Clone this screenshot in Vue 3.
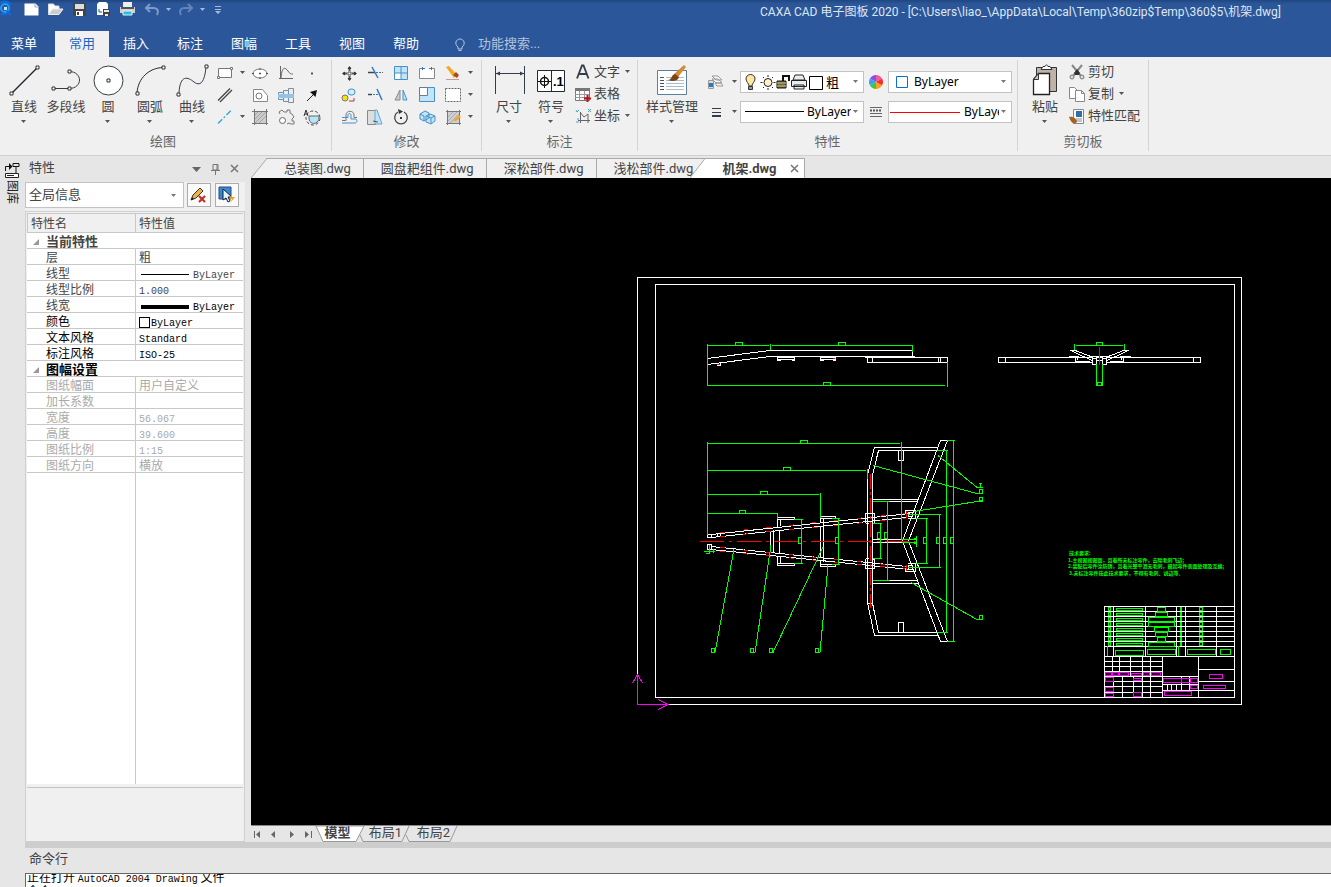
<script setup>
import { ref } from 'vue'

const quick = [
  { name: '新建', art: '<path d="M1.5 3.5h11l3 3v9h-14z" fill="#fff"/><path d="M12 3v4h4" fill="none" stroke="#9aa7bd"/>' },
  { name: '打开', art: '<path d="M1.5 14V4h5l1.500 2H12v3" fill="#fff" stroke="#ddd"/><path d="M1.500 14.500 5.500 9H16l-4 5.500z" fill="#ccc" stroke="#eee"/>' },
  { name: '保存', art: '<path d="M2 3h13v13H3.500L2 14.500z" fill="#444"/><path d="M4 4h9v5H4z" fill="#ddd"/><path d="M5 11h7v5H5z" fill="#fff"/><path d="M6 12h2v3H6z" fill="#444"/>' },
  { name: '另存为', art: '<path d="M4 2h7l2 2v11H2V4z" fill="#fff"/><path d="M4 9v3h3" stroke="#2b579a" fill="none"/><path d="M8 9h7v7H8z" fill="#444"/><path d="M9 10h5v2H9zM10 14h3v2h-3z" fill="#eee"/>' },
  { name: '打印', art: '<path d="M4 2h9v5H4z" fill="#eee"/><path d="M1 7h15v6H1z" fill="#d0d0d0"/><path d="M2 7h13v2H2z" fill="#555"/><path d="M4 11h9v4H4z" fill="#1fc3e8" stroke="#eee"/>' }
]
const menus = ['菜单', '常用', '插入', '标注', '图幅', '工具', '视图', '帮助']
const activeMenu = ref('常用')

const box = (x, y) => `<path d="M${x - 1.5} ${y - 1.5}h3v3h-3z" fill="#fff" stroke="#333"/>`
const draws = [
  { name: '直线', more: true, art: `<path d="M6 31 32 5" stroke="#222a33" stroke-width="1.500"/>${box(5.5, 31.5)}${box(31.5, 5.5)}` },
  { name: '多段线', more: false, art: `<path d="M5 26.500h16c14 0 14-17 0-17" fill="none" stroke="#333c48"/>${box(5.5, 26.5)}${box(21.5, 26.5)}${box(21.5, 9.5)}` },
  { name: '圆', more: true, art: `<circle cx="18.500" cy="18.500" r="14.500" fill="#fff" stroke="#333c48"/>${box(18.500, 18.500)}` },
  { name: '圆弧', more: true, art: `<path d="M5 31C6 16 17 6 31 5.500" fill="none" stroke="#222a33"/>${box(5.5, 31.5)}${box(31.5, 5.5)}` },
  { name: '曲线', more: true, art: `<path d="M5 31C6 12 14 15 20 20c8 6 11-4 12-15" fill="none" stroke="#333c48"/>${box(4.5, 32.5)}${box(32.5, 4.5)}` }
]
const drawTools = [
  { name: '矩形', more: true, art: '<path d="M2.500 4.500h13v9h-13z" fill="#fff" stroke="#777"/><path d="M1.500 12.500h2v2h-2zM14.500 3.500h2v2h-2z" fill="#fff" stroke="#777"/>' },
  { name: '椭圆', art: '<ellipse cx="9" cy="9.500" rx="7" ry="4.500" fill="#fff" stroke="#777"/><path d="M9 8.500v2M8 9.500h2M9 4v2M9 13v2M1 9.500h2M15 9.500h2" stroke="#555"/>' },
  { name: '公式曲线', art: '<path d="M3.500 2v13M2 14.500h14M4 14C5 2 8 3 11 7c2 3 3 3 5 3" fill="none" stroke="#666"/>' },
  { name: '点', art: '<path d="M8 8.500h2v2H8z" fill="#555"/>' },
  { name: '平行线', more: false, art: '<path d="M2 14.500 14 2.500M4 16l12-12" stroke="#444" stroke-width="1.300"/>' },
  { name: '轮廓', art: '<path d="M2.500 3.500h9l5 6v6h-14z" fill="#fff" stroke="#888"/><circle cx="8" cy="10" r="3" fill="#fff" stroke="#777"/>' },
  { name: '轴', art: '<path d="M1.500 6.500h5v7h-5zM6.500 4.500h5v11h-5zM11.500 2.500h5v14h-5z" fill="#eee" stroke="#7a8fa5"/><path d="M1 8h16v4H1z" fill="#8fc5ea"/>' },
  { name: '箭头', art: '<path d="M4 15 10 9" stroke="#222"/><path d="m14 4-1.500 7L7 6z" fill="#111"/>' },
  { name: '中心线', more: true, art: '<path d="M2 15.500 15 2.500" stroke="#27a9e1" stroke-width="1.300" stroke-dasharray="6 2 2 2"/>' },
  { name: '填充', art: '<path d="M3 3h12v12H3z" fill="#ccc"/><path d="m3 8 5-5M3 12l9-9M4 15 15 4M8 15l7-7" stroke="#999" stroke-width=".8"/><path d="M1 3.500h16M1 15.500h16M3.500 1v16M15.500 1v16" stroke="#777"/>' },
  { name: '齿形', art: '<path d="M3 6 2 4l3-2 2 2h3V2h3v3l2 1 2 3-2 2v2h2v3h-3l-2-1-2 1" fill="#eee" stroke="#777"/><circle cx="5.500" cy="12.500" r="3" fill="#fff" stroke="#666"/>' },
  { name: '局部放大', art: '<circle cx="10" cy="10" r="7" fill="none" stroke="#444" stroke-dasharray="3 2"/><path d="M6 8h10c1 9-10 10-10 2z" fill="#b7e4f7" stroke="#666"/><path d="m1 8 2-6 2 6M2 6h3" fill="none" stroke="#333"/>' }
]
const modifyTools = [
  { name: '平移', art: '<path d="M8 8h3v3H8z" fill="#fff" stroke="#555"/><path d="M9.500 3v4M9.500 12v4M3 9.500h4M12 9.500h4" fill="none" stroke="#555" stroke-width="2"/><path d="m9.500 2 2 3h-4zM9.500 17l-2-3h4zM2 9.500l3-2v4zM17 9.500l-3-2v4z" fill="#333"/>' },
  { name: '裁剪', art: '<path d="M2 8.500h7" stroke="#444" stroke-width="1.500"/><path d="M10 8.500h7" stroke="#2f7ac0" stroke-dasharray="2 1"/><path d="m6 3 6 11" stroke="#2f7ac0" stroke-width="1.500"/>' },
  { name: '阵列', art: '<path d="M2.500 2.500h13v13h-13z" fill="#bfe6f8" stroke="#4a8fc5"/><path d="M3 9h6v6H3z" fill="#fff"/><path d="M9 2v13M2 9h13" fill="none" stroke="#4a8fc5"/>' },
  { name: '打断', art: '<path d="M4 4.500H1.500v10h15v-10H14" fill="#fff" stroke="#888"/><path d="M4.500 3v3M13.500 3v3M4 4.500h3M11 4.500h3" stroke="#2f7ac0"/>' },
  { name: '删除', more: true, art: '<path d="m2 3 3-1 8 9-3 3z" fill="#f5a623"/><path d="m9 11 3-3 3 3-2 3z" fill="#a34a28"/><path d="M2 15.500h13" stroke="#c99"/>' },
  { name: '复制', art: '<circle cx="5" cy="12" r="3" fill="#f5e400" stroke="#777"/><rect x="8" y="3" width="7" height="6" rx="3" fill="#cdeffb" stroke="#4a8fc5"/><path d="M9 15h5v-3" fill="none" stroke="#b33"/>' },
  { name: '延伸', art: '<path d="M2 8.500h4" stroke="#444" stroke-width="1.500"/><path d="M7 8.500h5" stroke="#2f7ac0" stroke-dasharray="2 1"/><path d="m11 3 5 11" stroke="#2f7ac0" stroke-width="1.500"/>' },
  { name: '镜像', art: '<path d="M8 4v10H3z" fill="#ccc" stroke="#888"/><path d="M11 4v10h4z" fill="#bfe6f8" stroke="#4a8fc5"/>' },
  { name: '缩放', art: '<path d="M1.500 1.500h15v14h-15z" fill="#bfe6f8" stroke="#4a8fc5"/><path d="M1.500 1.500h8v8h-8z" fill="#fff" stroke="#778"/>' },
  { name: '拉伸', more: true, art: '<path d="M1.500 2.500h15v13h-15z" fill="#fff" stroke="#666" stroke-dasharray="2 1"/>' },
  { name: '等距线', art: '<path d="M2 12.500h4V7c0-5 8-5 8 0v2.500h3" fill="none" stroke="#777"/><path d="M2 9.500h6V7c0-2 3-2 3 0v4h4c3 0 2 4 0 4H2" fill="none" stroke="#4a8fc5"/>' },
  { name: '拔模', art: '<path d="M1.500 2.500H10v14H1.500z" fill="#ddd" stroke="#888"/><path d="m11 2 5 14h-7V2z" fill="#bfe6f8" stroke="#6aa5cc"/><path d="M7 13l5 1" stroke="#555"/>' },
  { name: '旋转', art: '<path d="M6 4a6.300 6.300 0 1 0 6 0" fill="none" stroke="#444" stroke-width="1.300"/><path d="m6 1 5 2.500L7 6z" fill="#333"/><path d="M8 9h2v2H8z" fill="#333"/>' },
  { name: '分解', art: '<path d="m2 6 5-3 4 2v5l-5 3-4-2zM8 8l4-2 5 2v5l-4 3-5-2z" fill="#bfe6f8" stroke="#4a8fc5"/><path d="m8 8 5 2 4-2M13 10v5M2 6l4 2v5" fill="none" stroke="#4a8fc5"/>' },
  { name: '编辑填充', more: true, art: '<path d="M3.500 3.500h12v12h-12z" fill="#d0d0d0" stroke="#777"/><path d="M2 3.500h15M2 15.500h15M3.500 2v15M15.500 2v15" stroke="#777"/><path d="m4 9 5-5M4 13l9-9M6 15l9-9" stroke="#aaa"/><path d="m9 13 6-6 2 2-5 4z" fill="#f3a323"/>' }
]
const notes = [
  { name: '文字', more: true, art: '<path d="m3 15.500 5-13h1.500l5 13M5.500 11h7" fill="none" stroke="#333c48" stroke-width="1.800"/>' },
  { name: '表格', more: false, art: '<path d="M1.500 3.500h14v12h-14z" fill="#fff" stroke="#777"/><path d="M1 3h15v3H1z" fill="#777"/><path d="M1 9.500h14M1 12.500h14M5.500 6v9M10.500 6v9" stroke="#999"/><path d="M13.500 10v7M10 13.500h7" stroke="#b3131b" stroke-width="2"/>' },
  { name: '坐标', more: true, art: '<path d="M6.500 5v11M4 13.500h12M6 5l4 5 4-3v9" fill="none" stroke="#666"/><path d="m2 3 1 2 2-2M14 2l3 3M17 2l-3 3M2 15h3M3 12h2" stroke="#4d9fd6" fill="none"/>' }
]
const clips = [
  { name: '剪切', more: false, art: '<path d="m4 2 9 11M14 2 5 13" stroke="#888" stroke-width="2"/><path d="m6 10 3-4 3 4-1 2H7z" fill="#333"/><circle cx="4" cy="14" r="2" fill="#ddd" stroke="#777"/><circle cx="14" cy="14" r="2" fill="#ddd" stroke="#777"/>' },
  { name: '复制', more: true, art: '<path d="M1.500 2.500h5l3 3v8h-8z" fill="#fff" stroke="#888"/><path d="M7.500 5.500h6l3 3v8h-9z" fill="#fff" stroke="#888"/><path d="M13.500 5.500v3h3" fill="none" stroke="#888"/>' },
  { name: '特性匹配', more: false, art: '<path d="M5.500 2.500h10v14h-10z" fill="#fff" stroke="#888"/><path d="M8 4h6v6H8z" fill="#2f6fa8"/><path d="M8 12h6M8 14h6" stroke="#88a"/><path d="M1 10c4-1 8 2 8 5-3 3-6 1-8-5z" fill="#a8631d"/>' }
]

const props1 = [
  { k: '层', v: '粗' },
  { k: '线型', v: 'ByLayer', mark: 'thin' },
  { k: '线型比例', v: '1.000' },
  { k: '线宽', v: 'ByLayer', mark: 'thick' },
  { k: '颜色', v: 'ByLayer', mark: 'swatch' },
  { k: '文本风格', v: 'Standard' },
  { k: '标注风格', v: 'ISO-25' }
]
const props2 = [
  { k: '图纸幅面', v: '用户自定义' },
  { k: '加长系数', v: '' },
  { k: '宽度', v: '56.067' },
  { k: '高度', v: '39.600' },
  { k: '图纸比例', v: '1:15' },
  { k: '图纸方向', v: '横放' }
]
const isLatin = (v) => /^[\x20-\x7e]+$/.test(v)
const docs = ['总装图.dwg', '圆盘耙组件.dwg', '深松部件.dwg', '浅松部件.dwg']

const partRows = [4, 6, 13, 13, 7, 6, 4, 13].map((half, i) => ({ half, y: 607.5 + i * 5 }))
const dims = [
  [801.5, 519.5, 563.5, 794], [838.5, 518.5, 564.5, 832], [880.5, 523.5, 558.5, 873],
  [887.5, 501.5, 580.5, 873], [926.5, 518.5, 563.5, 916], [939.5, 514.5, 567.5, 908],
  [946.5, 450.5, 632.5, 937], [953.5, 440.5, 641.5, 947]
].map(([x, a, b, from]) => ({ d: `M${from} ${a}H${x + 1}M${x} ${a}V${b}M${from} ${b}H${x + 1}`, x: x - 3, y: x === 880.5 || x === 887.5 ? 532.5 : 537.5 }))
</script>

<template>
  <div class="app">
    <header class="top">
      <div class="titlebar">
        <svg class="logo" width="14" height="18" viewBox="0 0 14 18"><circle cx="5" cy="8" r="4" fill="none" stroke="#1d9bff" stroke-width="2" /><path d="M0 3c4-3 9-1 11 2M7 11l4 4M1 14h6" stroke="#0a6ee0" stroke-width="2" fill="none" /><path d="M4 7h3v3H4z" fill="#bfe4ff" /></svg>
        <button v-for="q in quick" :key="q.name" class="quick" :aria-label="q.name"><svg width="18" height="18" viewBox="0 0 18 18" v-html="q.art" /></button>
        <button class="quick undo" aria-label="撤销"><svg width="16" height="18" viewBox="0 0 16 18"><path d="m6 4-4 4 4 4M2 8h7c5 0 6 3 4 7" fill="none" stroke="#7e9bc8" stroke-width="2" /></svg></button>
        <svg class="caret pale" width="6" height="4" viewBox="0 0 6 4"><path d="M0 0h5L2.500 3z" /></svg>
        <button class="quick undo" aria-label="重做"><svg width="16" height="18" viewBox="0 0 16 18"><path d="m10 4 4 4-4 4M14 8H7c-5 0-6 3-4 7" fill="none" stroke="#6284bb" stroke-width="2" /></svg></button>
        <svg class="caret pale" width="6" height="4" viewBox="0 0 6 4"><path d="M0 0h5L2.500 3z" /></svg>
        <svg class="caret pale more" width="6" height="8" viewBox="0 0 6 8"><path d="M0 0h6v1H0zM0 3h6v1H0zM0 5h6L3 8z" /></svg>
        <h1>CAXA CAD 电子图板 2020 - [C:\Users\liao_\AppData\Local\Temp\360zip$Temp\360$5\机架.dwg]</h1>
      </div>
      <nav class="menus">
        <button v-for="m in menus" :key="m" :class="{ on: m === activeMenu }" @click="activeMenu = m">{{ m }}</button>
        <svg class="bulb" width="12" height="14" viewBox="0 0 12 14"><path d="M4 9c-4-3-2-8 2-8s6 5 2 8v2H4zM4.500 12.500h3" fill="none" stroke="#b9c7de" /></svg>
        <input class="search" aria-label="功能搜索" placeholder="功能搜索..." />
      </nav>
    </header>

    <section class="ribbon">
      <div class="group g-draw">
        <div class="tools">
          <button v-for="d in draws" :key="d.name" class="big">
            <svg width="37" height="36" viewBox="0 0 37 36" v-html="d.art" />
            <span>{{ d.name }}</span>
            <svg v-if="d.more" class="caret" width="6" height="4" viewBox="0 0 6 4"><path d="M0 0h5L2.500 3z" /></svg>
          </button>
          <div class="grid four">
            <button v-for="t in drawTools" :key="t.name" class="small" :aria-label="t.name">
              <svg width="18" height="18" viewBox="0 0 18 18" v-html="t.art" />
              <svg v-if="t.more" class="caret" width="6" height="4" viewBox="0 0 6 4"><path d="M0 0h5L2.500 3z" /></svg>
            </button>
          </div>
        </div>
        <h2>绘图</h2>
      </div>
      <div class="group g-modify">
        <div class="tools">
          <div class="grid five">
            <button v-for="t in modifyTools" :key="t.name" class="small" :aria-label="t.name">
              <svg width="18" height="18" viewBox="0 0 18 18" v-html="t.art" />
              <svg v-if="t.more" class="caret" width="6" height="4" viewBox="0 0 6 4"><path d="M0 0h5L2.500 3z" /></svg>
            </button>
          </div>
        </div>
        <h2>修改</h2>
      </div>
      <div class="group g-note">
        <div class="tools">
          <button class="big">
            <svg width="37" height="36" viewBox="0 0 37 36"><path d="M4.500 4v28M33.500 4v28M5 11.500h28" stroke="#333c48" /><path d="m5 11.500 4-2v4zM33 11.500l-4-2v4z" fill="#333c48" /></svg>
            <span>尺寸</span>
            <svg class="caret" width="6" height="4" viewBox="0 0 6 4"><path d="M0 0h5L2.500 3z" /></svg>
          </button>
          <button class="big">
            <svg width="37" height="36" viewBox="0 0 37 36"><path d="M4.500 8.500h27v21h-27zM18.500 8v21" fill="#fff" stroke="#222a33" /><circle cx="11.500" cy="19.500" r="4" fill="none" stroke="#111" stroke-width="1.500" /><path d="M5 19.500h13M11.500 13v13" stroke="#111" /><text x="20" y="24" class="point">.1</text></svg>
            <span>符号</span>
            <svg class="caret" width="6" height="4" viewBox="0 0 6 4"><path d="M0 0h5L2.500 3z" /></svg>
          </button>
          <div class="list">
            <button v-for="n in notes" :key="n.name" class="row">
              <svg width="18" height="18" viewBox="0 0 18 18" v-html="n.art" /><span>{{ n.name }}</span>
              <svg v-if="n.more" class="caret" width="6" height="4" viewBox="0 0 6 4"><path d="M0 0h5L2.500 3z" /></svg>
            </button>
          </div>
        </div>
        <h2>标注</h2>
      </div>
      <div class="group g-props">
        <div class="tools">
          <button class="big style">
            <svg width="37" height="36" viewBox="0 0 37 36"><path d="M3.500 8.500h29v24h-29z" fill="#fff" stroke="#5b7f9f" /><path d="M6 15.500h4M6 18.500h4M6 21.500h4M6 24.500h4M6 27.500h4" stroke="#456" /><path d="M12 15.500h18M12 18.500h18M12 21.500h18M12 24.500h18M12 27.500h18" stroke="#abc" /><path d="m20 12 10-9 2 2-8 10z" fill="#d58a35" /><path d="M14 18c4 0 3-5 7-6l4 3c-1 4-6 5-11 3z" fill="#7b4415" /></svg>
            <span>样式管理</span>
            <svg class="caret" width="6" height="4" viewBox="0 0 6 4"><path d="M0 0h5L2.500 3z" /></svg>
          </button>
          <div class="combos">
            <button class="tiny" aria-label="图层"><svg width="18" height="18" viewBox="0 0 18 18"><path d="M6 3h6l4 4h-6zM6 6h6l4 4h-6zM9 10h6l2 3h-6z" fill="#f5f5f5" stroke="#999" /><path d="M2.500 7.500h5v8h-5z" fill="#ddd" stroke="#999" /><path d="M3 10h4v4H3z" fill="#2f78bd" /></svg><svg class="caret" width="6" height="4" viewBox="0 0 6 4"><path d="M0 0h5L2.500 3z" /></svg></button>
            <div class="combo layer">
              <svg class="deco" width="84" height="20" viewBox="0 0 84 20">
                <path d="M8 14c0-3-3-4-3-7 0-6 9-6 9 0 0 3-3 4-3 7z" fill="#ffe9a0" stroke="#333" /><path d="M7.500 14.500h4v3h-4z" fill="#999" stroke="#333" />
                <circle cx="27" cy="10.500" r="4" fill="#fff3cc" stroke="#222" /><path d="M27 3v2M27 16v2M19.500 10.500h2M32.500 10.500h2M22 5l1 1M31 15l1 1M22 16l1-1M31 6l1-1" stroke="#222" />
                <path d="M36 9h9v7h-9z" fill="#665" stroke="#111" /><path d="M42 9V4h6v5" fill="none" stroke="#111" stroke-width="2" /><path d="M36 11h9M36 14h9" stroke="#dc5" />
                <path d="M54 3h8l2 5H52zM50.500 8.500h15v6h-15zM53 13h10v4H53z" fill="#e8edf2" stroke="#222" />
                <path d="M68.500 4.500h13v13h-13z" fill="#fff" stroke="#000" />
              </svg>
              <select aria-label="当前图层"><option>粗</option></select>
              <svg class="caret" width="6" height="4" viewBox="0 0 6 4"><path d="M0 0h5L2.500 3z" /></svg>
            </div>
            <svg width="14" height="14" viewBox="0 0 14 14"><path d="M7 7V0a7 7 0 0 1 6 3.500z" fill="#ef5a9a" /><path d="m7 7 6-3.500a7 7 0 0 1 0 7z" fill="#f22f2f" /><path d="m7 7 6 3.500A7 7 0 0 1 7 14z" fill="#ff9d1c" /><path d="M7 7v7a7 7 0 0 1-6-3.500z" fill="#42c640" /><path d="m7 7-6 3.500a7 7 0 0 1 0-7z" fill="#38a2ee" /><path d="M7 7 1 3.500A7 7 0 0 1 7 0z" fill="#8e4bec" /></svg>
            <div class="combo color">
              <svg class="deco" width="24" height="20" viewBox="0 0 24 20"><path d="M7.500 4.500h11v11h-11z" fill="#fff" stroke="#0a6fd0" /></svg>
              <select aria-label="颜色"><option>ByLayer</option></select>
              <svg class="caret" width="6" height="4" viewBox="0 0 6 4"><path d="M0 0h5L2.500 3z" /></svg>
            </div>
            <button class="tiny" aria-label="线型"><svg width="18" height="18" viewBox="0 0 18 18"><path d="M6 5.500h9M6 9.500h9" stroke="#333c48" /><path d="M6 13h9" stroke="#333c48" stroke-width="2" /></svg><svg class="caret" width="6" height="4" viewBox="0 0 6 4"><path d="M0 0h5L2.500 3z" /></svg></button>
            <div class="combo ltype">
              <svg class="deco" width="66" height="20" viewBox="0 0 66 20"><path d="M4 9.500h59" stroke="#000" /></svg>
              <select aria-label="线型"><option>ByLayer</option></select>
              <svg class="caret" width="6" height="4" viewBox="0 0 6 4"><path d="M0 0h5L2.500 3z" /></svg>
            </div>
            <svg width="14" height="14" viewBox="0 0 14 14"><path d="M1 2.500h12M1 8.500h12M1 11.500h12" stroke="#666" /><path d="M1 5.500h12" stroke="#555" stroke-width="2" stroke-dasharray="2 1" /></svg>
            <div class="combo lwidth">
              <svg class="deco" width="72" height="20" viewBox="0 0 72 20"><path d="M1 10.500h70" stroke="#f00" /></svg>
              <select aria-label="线宽"><option>ByLayer</option></select>
              <svg class="caret" width="6" height="4" viewBox="0 0 6 4"><path d="M0 0h5L2.500 3z" /></svg>
            </div>
          </div>
        </div>
        <h2>特性</h2>
      </div>
      <div class="group g-clip">
        <div class="tools">
          <button class="big">
            <svg width="37" height="36" viewBox="0 0 37 36"><path d="M9.500 5.500h20v24h-20z" fill="#bdb3a7" stroke="#333" /><path d="M14 7.500h11l-2-3h-2c0-2-3-2-3 0h-2z" fill="#fff" stroke="#333" /><path d="M6.500 17.500 11.500 11.500h11v21h-16z" fill="#fff" stroke="#222" stroke-width="1.300" /><path d="M6.500 17.500h5v-6z" fill="#ccc" stroke="#333" /></svg>
            <span>粘贴</span>
            <svg class="caret" width="6" height="4" viewBox="0 0 6 4"><path d="M0 0h5L2.500 3z" /></svg>
          </button>
          <div class="list">
            <button v-for="n in clips" :key="n.name" class="row">
              <svg width="18" height="18" viewBox="0 0 18 18" v-html="n.art" /><span>{{ n.name }}</span>
              <svg v-if="n.more" class="caret" width="6" height="4" viewBox="0 0 6 4"><path d="M0 0h5L2.500 3z" /></svg>
            </button>
          </div>
        </div>
        <h2>剪切板</h2>
      </div>
    </section>

    <main class="body">
      <aside class="rail">
        <button>
          <svg width="16" height="18" viewBox="0 0 16 18"><path d="M1.500 10V5.500H6M9 2.500h6v3H9zM12 6v6" fill="none" stroke="#111" /><path d="m5 2 3.500 3.500L5 9z" fill="#111" /><path d="M1.500 12.500h13v4h-13z" fill="#fff" stroke="#222" /><path d="M3 14.500h7" stroke="#222" /></svg>
          <span>图库</span>
        </button>
      </aside>
      <div class="right">
        <div class="work">
          <section class="panel">
            <div class="phead">
              <span>特性</span>
              <svg width="12" height="12" viewBox="0 0 12 12"><path d="M1 4h9L5.500 9z" fill="#666" /></svg>
              <svg width="12" height="12" viewBox="0 0 12 12"><path d="M3 1.500h5V7H3zM1 7.500h9M5.500 8v4M7 2v5" fill="none" stroke="#777" /></svg>
              <svg width="12" height="12" viewBox="0 0 12 12"><path d="m2 2 7 7M9 2 2 9" stroke="#777" stroke-width="1.500" /></svg>
            </div>
            <div class="pick">
              <div class="combo scope">
                <select aria-label="选择对象"><option>全局信息</option></select>
                <svg class="caret" width="6" height="4" viewBox="0 0 6 4"><path d="M0 0h5L2.500 3z" /></svg>
              </div>
              <button class="sq" aria-label="清除选择"><svg width="20" height="20" viewBox="0 0 20 20"><path d="m2 15 2-5 7-7 3 3-7 7z" fill="#f2b040" stroke="#333" /><path d="m2 15 1-3 2 2z" fill="#222" /><path d="m10 11 6 6M16 11l-6 6" stroke="#c8281e" stroke-width="2" /></svg></button>
              <button class="sq" aria-label="快速选择"><svg width="20" height="20" viewBox="0 0 20 20"><path d="M2 2h12v12H2z" fill="#3c86cf" stroke="#174f92" /><path d="M6 4v11l3-2 2 4 2-1-2-4h4z" fill="#e8f2fb" stroke="#123" /><path d="m15 9-3 5h3l-2 4 5-6h-3z" fill="#f39b1c" /></svg></button>
            </div>
            <div class="sheet">
              <table>
                <colgroup><col class="ck" /><col /></colgroup>
                <thead><tr><th>特性名</th><th>特性值</th></tr></thead>
                <tbody>
                  <tr class="cat"><th colspan="2"><svg width="7" height="7" viewBox="0 0 7 7"><path d="M6 0v6H0z" fill="#999" /></svg>当前特性</th></tr>
                  <tr v-for="(p, i) in props1" :key="p.k" :class="{ dark: i > 3 }">
                    <td>{{ p.k }}</td>
                    <td><i v-if="p.mark" :class="p.mark"></i><span :class="[{ mono: isLatin(p.v) }, p.mark && 'after-' + p.mark]">{{ p.v }}</span></td>
                  </tr>
                </tbody>
                <tbody class="off">
                  <tr class="cat"><th colspan="2"><svg width="7" height="7" viewBox="0 0 7 7"><path d="M6 0v6H0z" fill="#999" /></svg>图幅设置</th></tr>
                  <tr v-for="p in props2" :key="p.k"><td>{{ p.k }}</td><td><span :class="{ mono: isLatin(p.v) }">{{ p.v }}</span></td></tr>
                </tbody>
              </table>
              <div class="blank"></div>
              <div class="hint"></div>
            </div>
          </section>

          <section class="view">
            <div class="docs">
              <button v-for="(d, i) in docs" :key="d" class="doc" :class="{ first: i === 0 }">
                <svg v-if="i === 0" class="slant" width="17" height="20" viewBox="0 0 17 20"><path d="M0 20 16 .5h1V20z" fill="#f0f0f0" /><path d="M0 20 16 .5h1" fill="none" stroke="#aaa" /></svg>{{ d }}
              </button>
              <button class="doc on"><svg class="slant" width="17" height="20" viewBox="0 0 17 20"><path d="M0 20 15 .5h2V20z" fill="#fff" /><path d="M0 20 15 .5h2" fill="none" stroke="#aaa" /></svg>机架.dwg<svg class="x" width="9" height="9" viewBox="0 0 9 9"><path d="m1 1 7 7M8 1 1 8" stroke="#777" stroke-width="1.500" /></svg></button>
            </div>
            <div class="canvas">
              <svg width="1080" height="647" viewBox="251 178 1080 647" shape-rendering="crispEdges" fill="none">
                <g stroke="#fff">
                  <path d="M637.500 277.500h604v427h-604zM655.500 284.500h579v413h-579z" />
                  <path d="M707 358.500 770 350.500H912.500V356.500M707 364.500 770 356.500H915M865 357.500H947.500V362.500H867.500V357.500M872.500 358v4M938.500 358v4M940.500 358v4M777 357.500h18M778 359.500h16M777 360.500h4M792 360.500h3M820 357.500h16M821 359.500h14M820 360.500h4M833 360.500h3M777.500 357v4M794.500 357v4M820.500 357v4M835.500 357v4M717 365.500h3.500V362" />
                  <path d="M1093 357.500H998.500v5h94M1005.500 358v4M1106 357.500h94.500v5H1106M1193.500 358v4M1070 350.500h4M1070 350l6 3 17 8M1074 350l18 7M1125 350.500h4M1129 350l-6 3-17 8M1125 350l-18 7M1075.500 357v4h14M1077.500 357v3M1123.500 357v4h-14M1121.500 357v3M1069 356.500h10M1120 356.500h11M1090 356.500h18" />
                  <path d="M1092.500 358.500h4v6h-4zM1102.500 358.500h4v6h-4zM1096 360.500h7M1096 357.500h7" />
                  <path d="M867.500 475V603L874.500 635.500H938M872.500 475V603L878.500 632.500H938M867.500 475 874.500 447.500H938M872.500 475 878.500 450.500H938M867 603.500h6M940.500 440.500 902.500 541 940.500 641.500H947.500L908.500 541 947.500 440.500z" />
                  <path d="M898.500 451v9.500h5V451M898.500 632v-9.500h5V632M873 499.500h45M873 501.500h44M873 580.500h44M873 583.500h45M873 539.500h29M873 542.500h29" />
                  <path d="M711 534.500 910 513.500M711 537.500 907 517.500M711 546.500 907 566.500M711 549.500 910 569.500" />
                  <path d="M777.500 518.500v8M777.500 556v9M780.500 519v7M780.500 557v7M777 517.500h17v2h-17M777 563.500h17v2h-17M770.500 531v21M773.500 530v23M779.500 530v24M820.500 517v5M820.500 561v5M823.500 519v43M820.500 526v31M820 516.500h15v2h-15M820 564.500h15v2h-15" />
                  <path d="M865.500 523v-9.500h9V523h-3M865.500 523.500h3M865.500 559v9.500h9V559h-3M865.500 558.500h3M905.500 514v-3.500h10v8h-8M905.500 568v3.500h10v-8h-8M908.500 512.500h4v4h-4zM908.500 565.500h4v4h-4zM707.500 534.500h4v3h-4zM717.500 533.500h3v3h-3zM707.500 544.500h4v5h-4z" />
                  <path d="M1104.500 697V606.500H1234M1104 611.500h130M1104 616.500h130M1104 621.500h130M1104 626.500h130M1104 631.500h130M1104 636.500h130M1104 641.500h130M1104 646.500h130M1104 656.500h130M1113.500 606v50M1145.500 606v50M1176.500 606v50M1185.500 606v50M1216.500 606v50" />
                  <path d="M1104 661.500h58M1104 666.500h58M1104 671.500h58M1104 676.500h94M1104 681.500h58M1104 686.500h58M1104 692.500h58M1112.500 656v20M1119.500 656v20M1130.500 656v20M1142.500 656v41M1150.500 656v41M1162.500 656v41M1113.500 676v21M1122.500 676v21M1133.500 676v21M1198.500 656v41M1162 684.500h36M1162 690.500h36M1181.500 676v14M1189.500 676v14M1167.500 684v6M1171.500 684v6M1176.500 684v6M1198 669.500h36M1198 681.500h36M1198 690.500h36" />
                </g>
                <g stroke="#f00">
                  <path d="M700 541.500h216" stroke-dasharray="24 5 3 5" /><path d="M870.500 474v134" stroke-dasharray="15 3 3 3" /><path d="M1099.500 347v18" />
                  <path d="M720 532.500 905 513.500M720 536.500 905 518.500M720 547.500 905 566.500M720 551.500 905 568.500" stroke-dasharray="5 18" />
                  <path d="M717 364.500h3M833 358.500h2M906.500 511v7M906.500 565v6" />
                </g>
                <g stroke="#0f0">
                  <path d="M707.500 344v42M707 345.500h62M770.500 344v6M772 345.500h140.500V352M735.500 345v-2.500h7V345M838.500 345v-2.500h7V345M707 385.500h238M947.500 362v25M823.500 385v-2.500h7V385" />
                  <path d="M1074.500 344v6M1124.500 344v6M1076 345.500h47M1096.500 345v-2.500h6V345M1096.500 364v22M1102.500 364v22M1097.500 382.500h4v3h-4z" />
                  <path d="M707.500 442v93M707 443.500h193M800.500 443v-2.500h7V443M901.500 442v98M707 470.500h158.500M867.500 469v10M783.500 470v-2.500h7V470M707 494.500h112M820.500 493v25M760.500 494v-2.500h7V494M707 513.500h70.500V519M739.500 513v-2.500h6V513" />
                  <template v-for="m in dims" :key="m.d"><path :d="m.d" /><rect :x="m.x" :y="m.y" width="3" height="6" /></template>
                  <path d="M902 539.500h14M902 542.500h14M913.500 538.500h3v5h-3M916.500 536v11M704 551.500h11M706 553.500h4M709.500 545v8M713 549v4" />
                  <path d="M873 465.500 977 493.500h6M938 455.500 977 487.500h6M914 511.500 977 501.500h6M911 582.500 977 619.500h6M980.500 483v4M979 483.500h3M979.500 489.500h3v4h-3zM979.500 497.500h3v3h-3zM979.500 615.500h3v4h-3z" />
                  <path d="M734 549 715 652.500h-4.500M771 545 755 652.500h-5.500M823 547 773 652.500h-4M828 565 820 652.500h-4.500M711.500 648.500h3v4h-3zM750.500 648.500h3v4h-3zM769.500 648.500h3v4h-3zM815.500 648.500h3v4h-3z" />
                  <template v-for="r in partRows" :key="r.y">
                    <rect x="1108.500" :y="r.y" width="2" height="3" /><rect x="1116.500" :y="r.y + 1" width="26" height="2" />
                    <rect :x="1161.5 - r.half" :y="r.y" :width="r.half * 2" height="4" /><rect x="1180.500" :y="r.y" width="1" height="3" /><rect x="1199.500" :y="r.y" width="3" height="3" />
                  </template>
                  <path d="M1107.500 646v10M1178.500 646v10M1115.500 650.500h28v5h-28zM1147.500 649.500h28v5h-28zM1187.500 649.500h28v5h-28zM1220.500 649.500h10v5h-10z" />
                </g>
                <g stroke="#f0f">
                  <path d="M637.500 704V675M632.500 683 637.500 674.500 642.500 683M637 704.500h31M658 699.500l10 5-10 5" />
                  <path d="M1105.500 672.500h6v3h-6zM1112.500 672.500h6v3h-6zM1119.500 672.500h9v3h-9zM1131.500 673.500h10v2h-10zM1143.500 672.500h6v3h-6zM1151.500 672.500h9v3h-9zM1105.500 677.500h8v4h-8zM1105.500 687.500h8v4h-8zM1105.500 693.500h8v3h-8zM1133.500 678.500h8v2h-8zM1133.500 692.500h8v4h-8zM1163.500 678.500h18v4h-18zM1181.500 678.500h9v4h-9zM1190.500 678.500h7v4h-7zM1190.500 685.500h7v3h-7zM1164.500 691.500h27v4h-27zM1209.500 674.500h13v4h-13zM1203.500 685.500h22v3h-22z" />
                </g>
                <g class="cadtext">
                  <text x="1069" y="555">技术要求:</text>
                  <text x="1068" y="562">1.主视图视图面，且着所未标注零件，去除毛刺飞边;</text>
                  <text x="1068" y="568">2.装配后零件涂防锈，且着光整平滑无毛刺，藏起零件表面处理及互换;</text>
                  <text x="1069" y="575">3.未标注零件按此技术要求，不得有毛刺、锐边等。</text>
                </g>
              </svg>
            </div>
            <div class="layouts">
              <svg width="64" height="16" viewBox="0 0 64 16"><path d="M3 5h1v7H3zM9 5v7L5 8.500zM24 5v7L20 8.500zM39 5v7l4-3.500zM54 5v7l4-3.500zM60 5h1v7h-1z" fill="#666" /></svg>
              <button class="lay on"><svg width="50" height="16" viewBox="0 0 50 16"><path d="M1 0 8 15.500H41L49 0z" fill="#fff" stroke="#999" /></svg><span>模型</span></button>
              <button class="lay"><svg width="50" height="16" viewBox="0 0 50 16"><path d="M-3 9 0 15.500H39L46 0" fill="none" stroke="#999" /></svg><span>布局1</span></button>
              <button class="lay"><svg width="50" height="16" viewBox="0 0 50 16"><path d="M-5 9-2 15.500H39L46 0" fill="none" stroke="#999" /></svg><span>布局2</span></button>
            </div>
          </section>
        </div>
        <section class="command">
          <h2>命令行</h2>
          <div class="log"><p>正在打开 <span class="mono">AutoCAD 2004 Drawing</span> 文件</p><p>命令:</p></div>
        </section>
      </div>
    </main>
  </div>
</template>

<style>
body { margin: 0; }
</style>

<style scoped>
.app { height: 100vh; display: flex; flex-direction: column; overflow: hidden; background: #e6e6e6; color: #444; font: 13px/18px Roboto, "Noto Sans CJK SC", sans-serif; }
* { box-sizing: border-box; }
button { border: 0; background: none; padding: 0; font: inherit; color: inherit; cursor: pointer; }
svg { display: block; flex: none; }
h1, h2, p { margin: 0; font-weight: 400; }
.caret { fill: #555; }
.top { background: linear-gradient(#1f467f, #2b579a 4px); color: #fff; }
.titlebar { height: 31px; display: flex; align-items: flex-start; }
.logo { margin-right: 9px; }
.quick { width: 24px; display: flex; }
.quick.undo { width: 22px; margin-left: 1px; }
.caret.pale { fill: #a7b9d8; margin: 8px 5px 0 0; }
.caret.more { margin: 6px 0 0 4px; }
h1 { margin: 3px 50px 0 auto; font-size: 12px; line-height: 18px; color: #dfe6f2; white-space: nowrap; }
.menus { height: 26px; display: flex; align-items: center; }
.menus button { width: 54px; height: 26px; line-height: 24px; }
.menus button:first-child { width: 55px; padding-right: 7px; }
.menus button.on { background: #f0f0f0; color: #1c66c0; }
.bulb { margin: 2px 12px 0 21px; }
.search { width: 160px; border: 0; background: none; padding: 0 0 2px; height: 24px; font: inherit; color: #fff; }
.search::placeholder { color: #b5c3dc; }

.ribbon { display: flex; height: 99px; padding: 3px 0 4px; background: #f0f0f0; border-bottom: 1px solid #d0d0d0; }
.group { border-right: 1px solid #d4d4d4; display: flex; flex-direction: column; }
.group h2 { text-align: center; font-size: 13px; color: #666; line-height: 18px; }
.group.g-draw h2 { padding-right: 8px; }
.group.g-note h2, .group.g-clip h2 { padding-right: 6px; }
.tools { display: flex; height: 73px; }
.big { width: 42px; display: flex; flex-direction: column; align-items: center; white-space: nowrap; padding-top: 2px; }
.big span { line-height: 18px; }
.big .caret { margin-top: 4px; }
.g-draw { width: 332px; padding-left: 3px; }
.grid { display: grid; grid-template-rows: repeat(3, 22px); padding-top: 2px; }
.grid.four { grid-template-columns: 35px 26px 26px 26px; padding-left: 3px; }
.grid.five { grid-template-columns: repeat(4, 26px) 36px; padding-left: 8px; }
.small, .tiny { display: flex; align-items: center; }
.small .caret { margin-left: 6px; }
.g-modify { width: 150px; }
.g-note { width: 156px; padding-left: 6px; }
.point { font: bold 13px "Liberation Sans", sans-serif; fill: #000; }
.list { display: flex; flex-direction: column; padding-top: 1px; }
.row { display: flex; align-items: center; height: 22px; white-space: nowrap; }
.row span { margin-left: 2px; }
.row .caret { margin-left: 5px; }
.g-note .list { padding-left: 2px; }
.g-props { width: 380px; }
.big.style { width: 68px; }
.combos { display: grid; grid-template-columns: 34px 124px 24px 124px; grid-template-rows: 22px 22px; row-gap: 8px; padding-top: 11px; align-items: center; justify-items: center; }
.combos .combo { width: 100%; }
.tiny { justify-self: start; }
.tiny .caret { margin-left: 8px; }
.combo { position: relative; height: 22px; border: 1px solid #c3c3c3; background: #fff; }
.combo select { appearance: none; border: 0; background: none; width: 100%; height: 100%; padding: 0 12px 0 0; font: 12px/18px "Noto Sans", "Noto Sans CJK SC", sans-serif; color: #000; outline: 0; }
.combo .deco { position: absolute; left: 0; top: 0; }
.combo .caret { position: absolute; right: 4px; top: 8px; fill: #777; }
.combo.layer select { padding-left: 85px; font-size: 13px; }
.combo.color select { padding-left: 25px; }
.combo.ltype select { padding-left: 66px; }
.combo.lwidth select { padding-left: 75px; }
.g-clip { width: 131px; padding-left: 6px; }
.g-clip .list { padding-left: 2px; }

.body { flex: 1; display: flex; min-height: 0; }
.rail { width: 25px; }
.rail button { margin: 5px 0 0 4px; width: 16px; }
.rail span { writing-mode: vertical-rl; text-orientation: sideways; font-size: 12px; line-height: 16px; color: #222; margin-top: 1px; }
.right { flex: 1; min-width: 0; display: flex; flex-direction: column; }
.work { flex: 1; min-height: 0; display: flex; }
.panel { width: 220px; display: flex; flex-direction: column; margin-right: 6px; background: #f0f0f0; }
.phead { height: 26px; display: flex; align-items: center; gap: 7px; padding: 0 4px; background: #e6e6e6; }
.phead span { flex: 1; line-height: 22px; margin-top: -3px; }
.pick { display: flex; align-items: center; gap: 3px; padding: 0 5px 3px 0; }
.scope { flex: 1; height: 26px; }
.combo.scope select { font-size: 13px; padding: 0 0 3px 3px; color: #444; }
.combo.scope .caret { right: 6px; top: 11px; }
.sq { width: 24px; height: 24px; display: grid; place-items: center; border: 1px solid #adadad; background: #fafafa; margin-right: 1px; }
.sheet { flex: 1; min-height: 0; display: flex; flex-direction: column; border: 1px solid #cfcfcf; padding: 1px; }
table { width: 100%; table-layout: fixed; border-collapse: separate; border-spacing: 0; font: 12px/14px "Noto Sans CJK SC", sans-serif; background: #fff; }
.ck { width: 108px; }
thead th { height: 20px; background: #f0f0f0; border: solid #c8c8c8; border-width: 1px 0 1px 1px; font-weight: 400; text-align: left; padding: 0 3px; }
tbody td, tbody th { height: 16px; padding: 1px 0 0 19px; border-bottom: 1px solid #c8c8c8; white-space: nowrap; }
tbody td + td { border-left: 1px solid #c8c8c8; padding-left: 3px; }
.mono { font: 10px/8px "Liberation Mono", monospace; }
tbody .cat th { text-align: left; padding: 0 0 0 6px; font-weight: 700; font-size: 13px; }
.cat svg { display: inline-block; margin-right: 6px; }
.dark, .off .cat { color: #000; }
.off { color: #aaa; }
.thin, .thick, .swatch { display: inline-block; vertical-align: middle; margin: 0 4px 0 2px; width: 48px; height: 1px; background: #000; }
.thick { height: 4px; }
.swatch { width: 11px; height: 11px; border: 1px solid #000; background: #fff; margin: 0 1px 0 0; }
.after-thick { color: #000; }
.blank { flex: 1; background: linear-gradient(#c8c8c8, #c8c8c8) 108px 0 / 1px 100% no-repeat #fff; }
.hint { height: 53px; border-top: 1px solid #c3c3c3; margin-top: 3px; }
.view { flex: 1; min-width: 0; display: flex; flex-direction: column; }
.docs { display: flex; height: 22px; padding-top: 2px; padding-left: 15px; }
.doc { position: relative; height: 20px; background: #f0f0f0; border: solid #aaa; border-width: 1px 1px 0 0; padding: 0 12px 0 17px; line-height: 18px; white-space: nowrap; }
.doc.first { padding-left: 18px; }
.doc:nth-child(4) { border-right: 0; }
.slant { position: absolute; left: -15px; top: -1px; }
.doc.on { background: #fff; font-weight: 700; display: flex; align-items: center; padding: 0 5px 0 17px; }
.doc .x { margin-left: 14px; }
.canvas { flex: 1; min-height: 0; background: #000; overflow: hidden; }
.cadtext { font: 700 5px "Noto Sans CJK SC", sans-serif; fill: #0f0; }
.layouts { display: flex; height: 17px; border-top: 1px solid #888; }
.lay { position: relative; width: 48px; height: 16px; line-height: 14px; padding-right: 3px; }
.lay svg { position: absolute; left: 0; top: 0; overflow: visible; }
.lay span { position: relative; display: block; height: 16px; }
.lay.on { font-weight: 700; z-index: 1; }
.command { height: 45px; border-top: 6px solid #cdcdcd; }
.command h2 { font-size: 13px; line-height: 21px; height: 25px; padding-left: 4px; }
.log { height: 14px; background: #fff; border: solid #666; border-width: 1px 0 0 1px; overflow: hidden; color: #000; font: 12px/14px "Noto Sans CJK SC", sans-serif; }
.log p { padding-left: 1px; }
.log p:first-child { margin-top: -4px; }
</style>
